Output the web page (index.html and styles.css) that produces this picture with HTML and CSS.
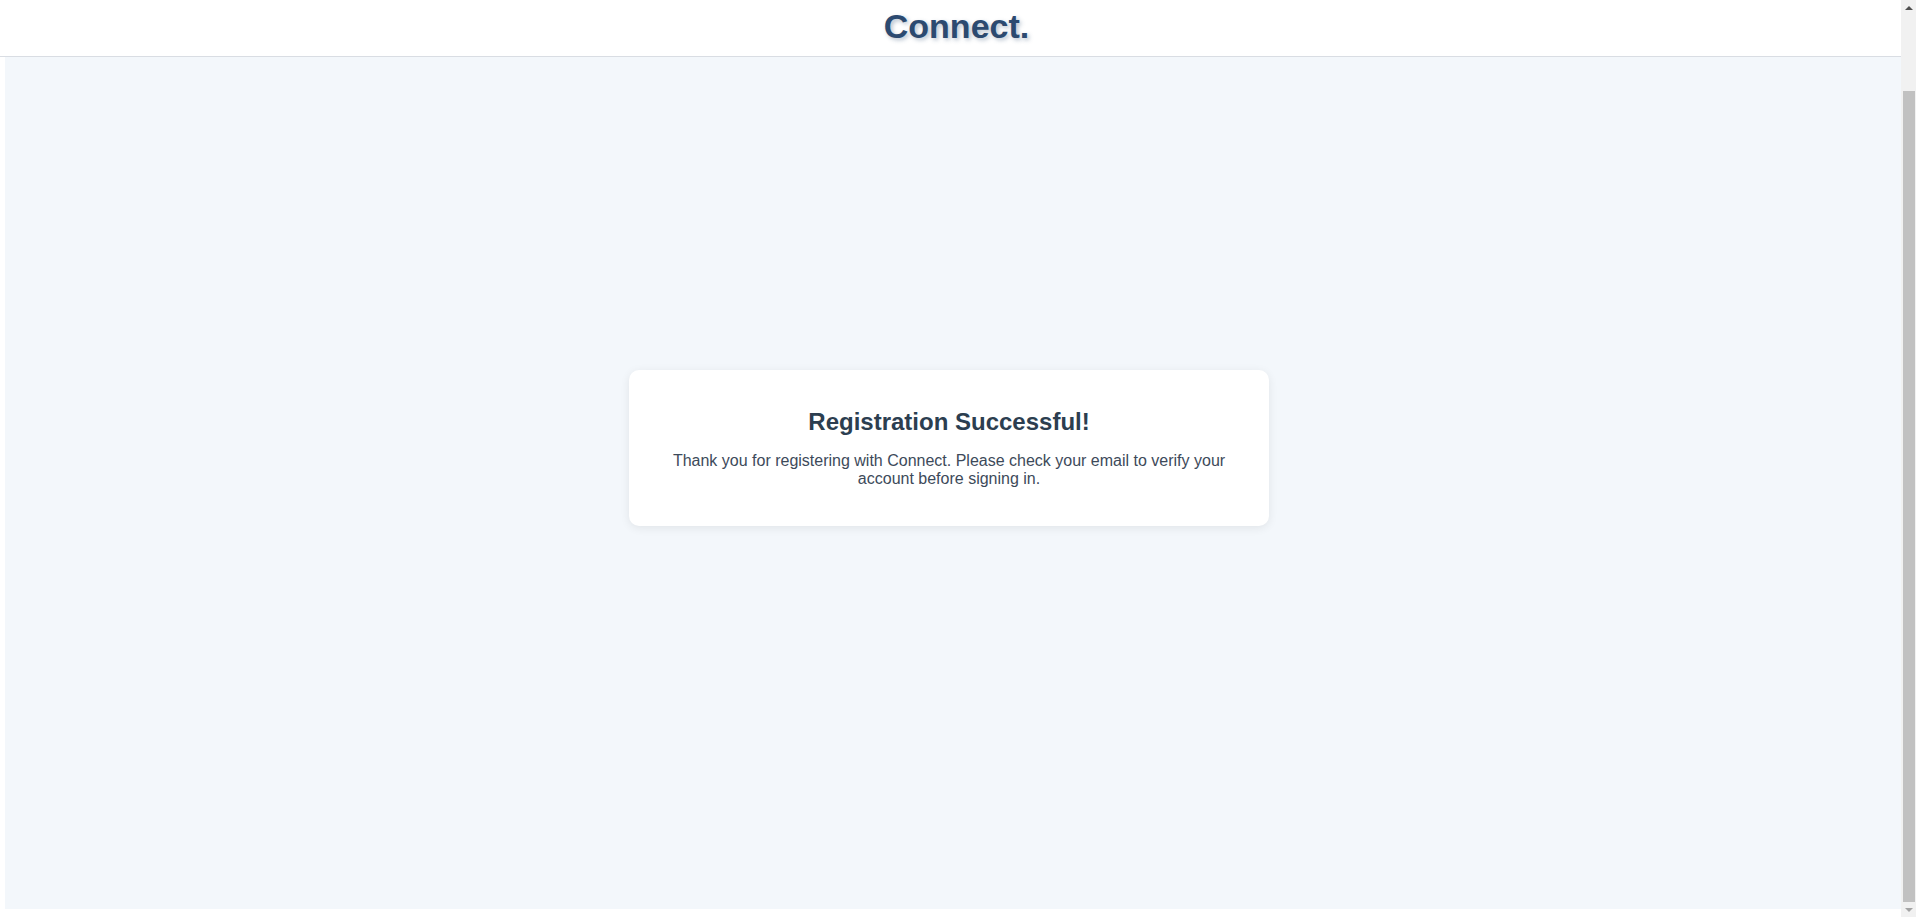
FILE: index.html
```html
<!DOCTYPE html>
<html lang="en">
<head>
<meta charset="utf-8">
<title>Connect. - Registration Successful</title>
<link rel="stylesheet" href="styles.css">
</head>
<body>
<div class="window">
  <header class="site-header">
    <h1 class="brand">Connect.</h1>
  </header>
  <main class="page">
    <section class="card">
      <h2 class="card-title">Registration Successful!</h2>
      <p class="card-text">Thank you for registering with Connect. Please check your email to verify your account before signing in.</p>
    </section>
  </main>
</div>
<div class="scrollbar" aria-hidden="true">
  <div class="scroll-btn"><span class="arrow-up"></span></div>
  <div class="scroll-gap"></div>
  <div class="scroll-thumb"></div>
  <div class="scroll-btn"><span class="arrow-down"></span></div>
</div>
</body>
</html>
```
FILE: styles.css
```css
html, body {
  margin: 0;
  height: 100%;
}
body {
  display: flex;
  overflow: hidden;
  background: #ffffff;
  font-family: "Liberation Sans", Arial, sans-serif;
}
.window {
  flex: 1;
  min-width: 0;
  display: flex;
  flex-direction: column;
}
.site-header {
  flex: none;
  height: 56px;
  background: #ffffff;
  border-bottom: 1px solid #d9dde3;
  display: flex;
  align-items: center;
  justify-content: center;
  padding-left: 12px;
}
.brand {
  margin: 0 0 4px;
  font-size: 34px;
  font-weight: 700;
  color: #2c4a70;
  text-shadow: 2px 2px 4px rgba(44, 74, 112, 0.35);
  line-height: 1;
}
.page {
  flex: 1;
  margin: 0 0 8px 5px;
  padding: 0 8px 70px 0;
  background: #f3f7fb;
  display: flex;
  align-items: center;
  justify-content: center;
}
.card {
  width: 640px;
  box-sizing: border-box;
  padding: 38px 40px 38px;
  background: #ffffff;
  border-radius: 10px;
  box-shadow: 0 2px 10px rgba(0, 0, 0, 0.08);
  text-align: center;
}
.card-title {
  margin: 0 0 16px;
  font-size: 24px;
  font-weight: 700;
  color: #2c3e50;
}
.card-text {
  margin: 0;
  font-size: 16px;
  color: #3d4a5a;
}
.scrollbar {
  flex: none;
  width: 15px;
  display: flex;
  flex-direction: column;
  background: #f1f1f1;
}
.scroll-btn {
  flex: none;
  height: 15px;
  display: flex;
  align-items: center;
  justify-content: center;
}
.arrow-up {
  width: 0;
  height: 0;
  border-left: 4px solid transparent;
  border-right: 4px solid transparent;
  border-bottom: 4px solid #505050;
}
.arrow-down {
  width: 0;
  height: 0;
  border-left: 4px solid transparent;
  border-right: 4px solid transparent;
  border-top: 4px solid #a3a3a3;
}
.scroll-gap {
  flex: none;
  height: 76px;
}
.scroll-thumb {
  flex: 1;
  margin: 0 1px 0 2px;
  background: #c1c1c1;
}
```
